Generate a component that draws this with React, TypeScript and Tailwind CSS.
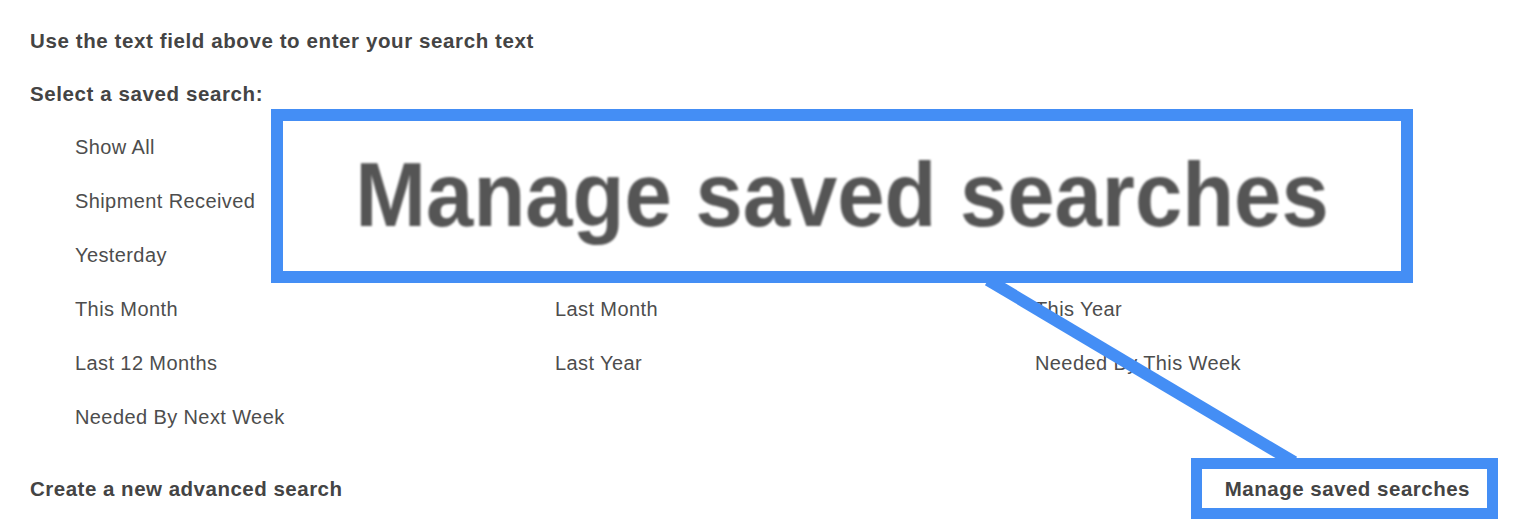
import React from "react";

const rows: string[][] = [
  ["Show All", "", ""],
  ["Shipment Received", "", ""],
  ["Yesterday", "", ""],
  ["This Month", "Last Month", "This Year"],
  ["Last 12 Months", "Last Year", "Needed By This Week"],
  ["Needed By Next Week", "", ""],
];

export default function App() {
  return (
    <div
      className="relative w-[1528px] h-[530px] overflow-hidden bg-white text-[#474747]"
      style={{ fontFamily: '"Liberation Sans", Arial, Helvetica, sans-serif' }}
    >
      <div className="flex flex-col pt-[15px] pl-[30px] pr-[58px]">
        <div className="h-[53px] flex items-center text-[20.5px] font-bold tracking-[0.6px] text-[#444]">
          Use the text field above to enter your search text
        </div>
        <div className="h-[52px] flex items-center text-[20.5px] font-bold tracking-[0.6px] text-[#444]">
          Select a saved search:
        </div>
        <div className="grid grid-cols-[480px_480px_480px] pl-[45px]">
          {rows.map((r, i) =>
            r.map((t, j) => (
              <div
                key={`${i}-${j}`}
                className="h-[54px] flex items-center text-[20px] tracking-[0.4px] text-[#4d4d4d]"
              >
                {t}
              </div>
            ))
          )}
        </div>
        <div className="mt-[18px] h-[54px] flex items-center justify-between text-[20.5px] font-bold tracking-[0.5px] text-[#444]">
          <span>Create a new advanced search</span>
          <span>Manage saved searches</span>
        </div>
      </div>

      {/* connector line */}
      <svg
        className="absolute left-0 top-0 pointer-events-none"
        width="1528"
        height="530"
        viewBox="0 0 1528 530"
      >
        <line x1="988" y1="280" x2="1294" y2="462" stroke="#448ef5" strokeWidth="12" />
      </svg>

      {/* big callout */}
      <div className="absolute left-[271px] top-[109px] w-[1142px] h-[174px] border-[12px] border-[#448ef5] bg-white flex items-center justify-center">
        <span className="text-[85px] font-bold text-[#555] blur-[1.2px] leading-none pb-[4px] scale-y-[1.06]">
          Manage saved searches
        </span>
      </div>

      {/* small highlight box */}
      <div className="absolute left-[1191px] top-[458px] w-[307px] h-[61px] border-[11px] border-[#448ef5]" />
    </div>
  );
}
